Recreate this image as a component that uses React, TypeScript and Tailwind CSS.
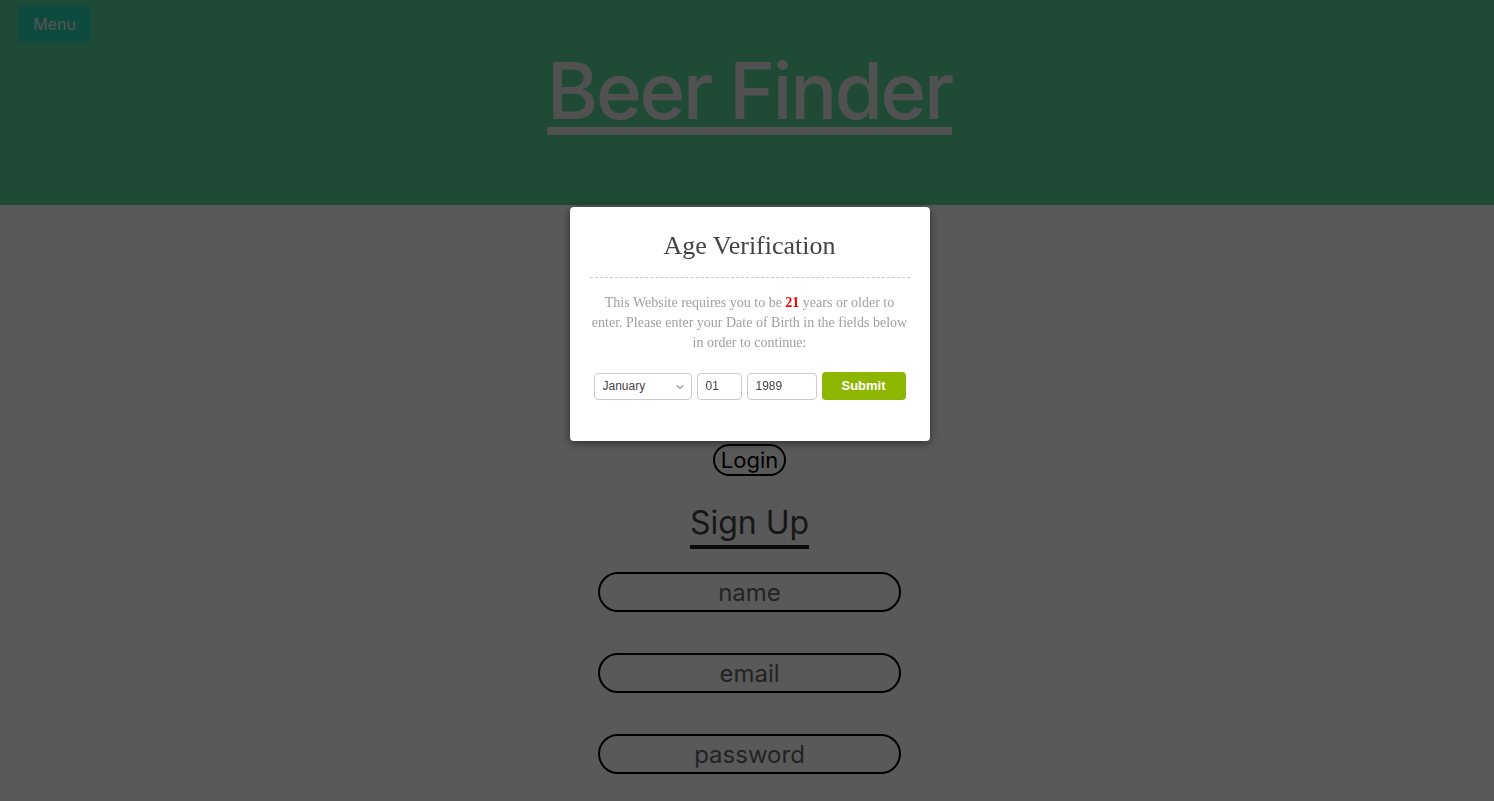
import { ChevronDown } from "lucide-react";

const sans = "font-['Inter','Liberation_Sans',sans-serif]";
const serif = "font-['Liberation_Serif','Times_New_Roman',serif]";

function PillInput({ placeholder, className = "" }: { placeholder: string; className?: string }) {
  return (
    <input
      placeholder={placeholder}
      className={`h-10 w-[303px] rounded-full border-2 border-black bg-transparent text-center text-2xl text-black outline-none placeholder:text-[#666] ${className}`}
    />
  );
}

function AgeGate() {
  return (
    <div className="fixed inset-0 z-10 bg-[rgba(0,0,0,0.65)]">
      <div className="absolute left-[calc(50%+2.5px)] top-[207px] w-[360px] -translate-x-1/2 rounded bg-white px-5 pb-[41px] pt-6 shadow-[0_2px_10px_rgba(0,0,0,0.5)]">
        <h2 className={`${serif} border-b border-dashed border-[#c8c8c8] pb-4 text-center text-[26px] leading-[30px] text-[#444]`}>
          Age Verification
        </h2>
        <p className={`${serif} mt-[15px] text-center text-sm leading-5 text-[#a0a0a0]`}>
          This Website requires you to be <b className="text-[#ff0000]">21</b> years or older to enter. Please enter your
          Date of Birth in the fields below in order to continue:
        </p>
        <div className="mt-[19px] flex items-center justify-center gap-[5px] font-['Liberation_Sans',Arial,sans-serif] text-xs text-[#444]">
          <div className="relative h-[27px] w-[98px]">
            <select className="h-full w-full appearance-none rounded-sm border border-[#ccc] bg-white pl-2 text-xs text-[#444] outline-none">
              <option>January</option>
              <option>February</option>
              <option>March</option>
            </select>
            <ChevronDown className="pointer-events-none absolute right-[6px] top-[8px] h-3 w-3 text-[#555]" strokeWidth={2} />
          </div>
          <input defaultValue="01" className="h-[27px] w-[45px] rounded-sm border border-[#ccc] px-2 outline-none" />
          <input defaultValue="1989" className="h-[27px] w-[70px] rounded-sm border border-[#ccc] px-2 outline-none" />
          <button className="h-[28px] w-[84px] rounded-sm bg-[#8db600] text-[13px] font-bold text-white">Submit</button>
        </div>
      </div>
    </div>
  );
}

export default function App() {
  return (
    <div className={`${sans} min-h-[801px] bg-white`}>
      <header className="flex h-[205px] flex-col bg-[#59d39a] pt-[5px]">
        <button className="ml-[18px] h-[38px] w-[73px] self-start rounded-md bg-[#28d3b1] text-base text-[#f0f0f0]">Menu</button>
        <h1 className="mt-[9px] pl-[5px] text-center text-[78px] font-medium leading-[78px] tracking-[-0.03em] text-[#e8e8e8]">
          <a href="#" className="underline decoration-[8px] underline-offset-[8px]">
            Beer Finder
          </a>
        </h1>
      </header>

      <main className="flex flex-col items-center pl-[5px] pt-[239px]">
        <button className="h-8 rounded-full border-2 border-black px-[6px] text-[22px] leading-7 text-black">
          Login
        </button>
        <h2 className="mt-[27px] text-[32px] leading-10 text-[#444] underline decoration-[#222] decoration-4 underline-offset-[11px]">
          Sign Up
        </h2>
        <PillInput placeholder="name" className="mt-[29px]" />
        <PillInput placeholder="email" className="mt-[41px]" />
        <PillInput placeholder="password" className="mt-[41px]" />
      </main>

      <AgeGate />
    </div>
  );
}
